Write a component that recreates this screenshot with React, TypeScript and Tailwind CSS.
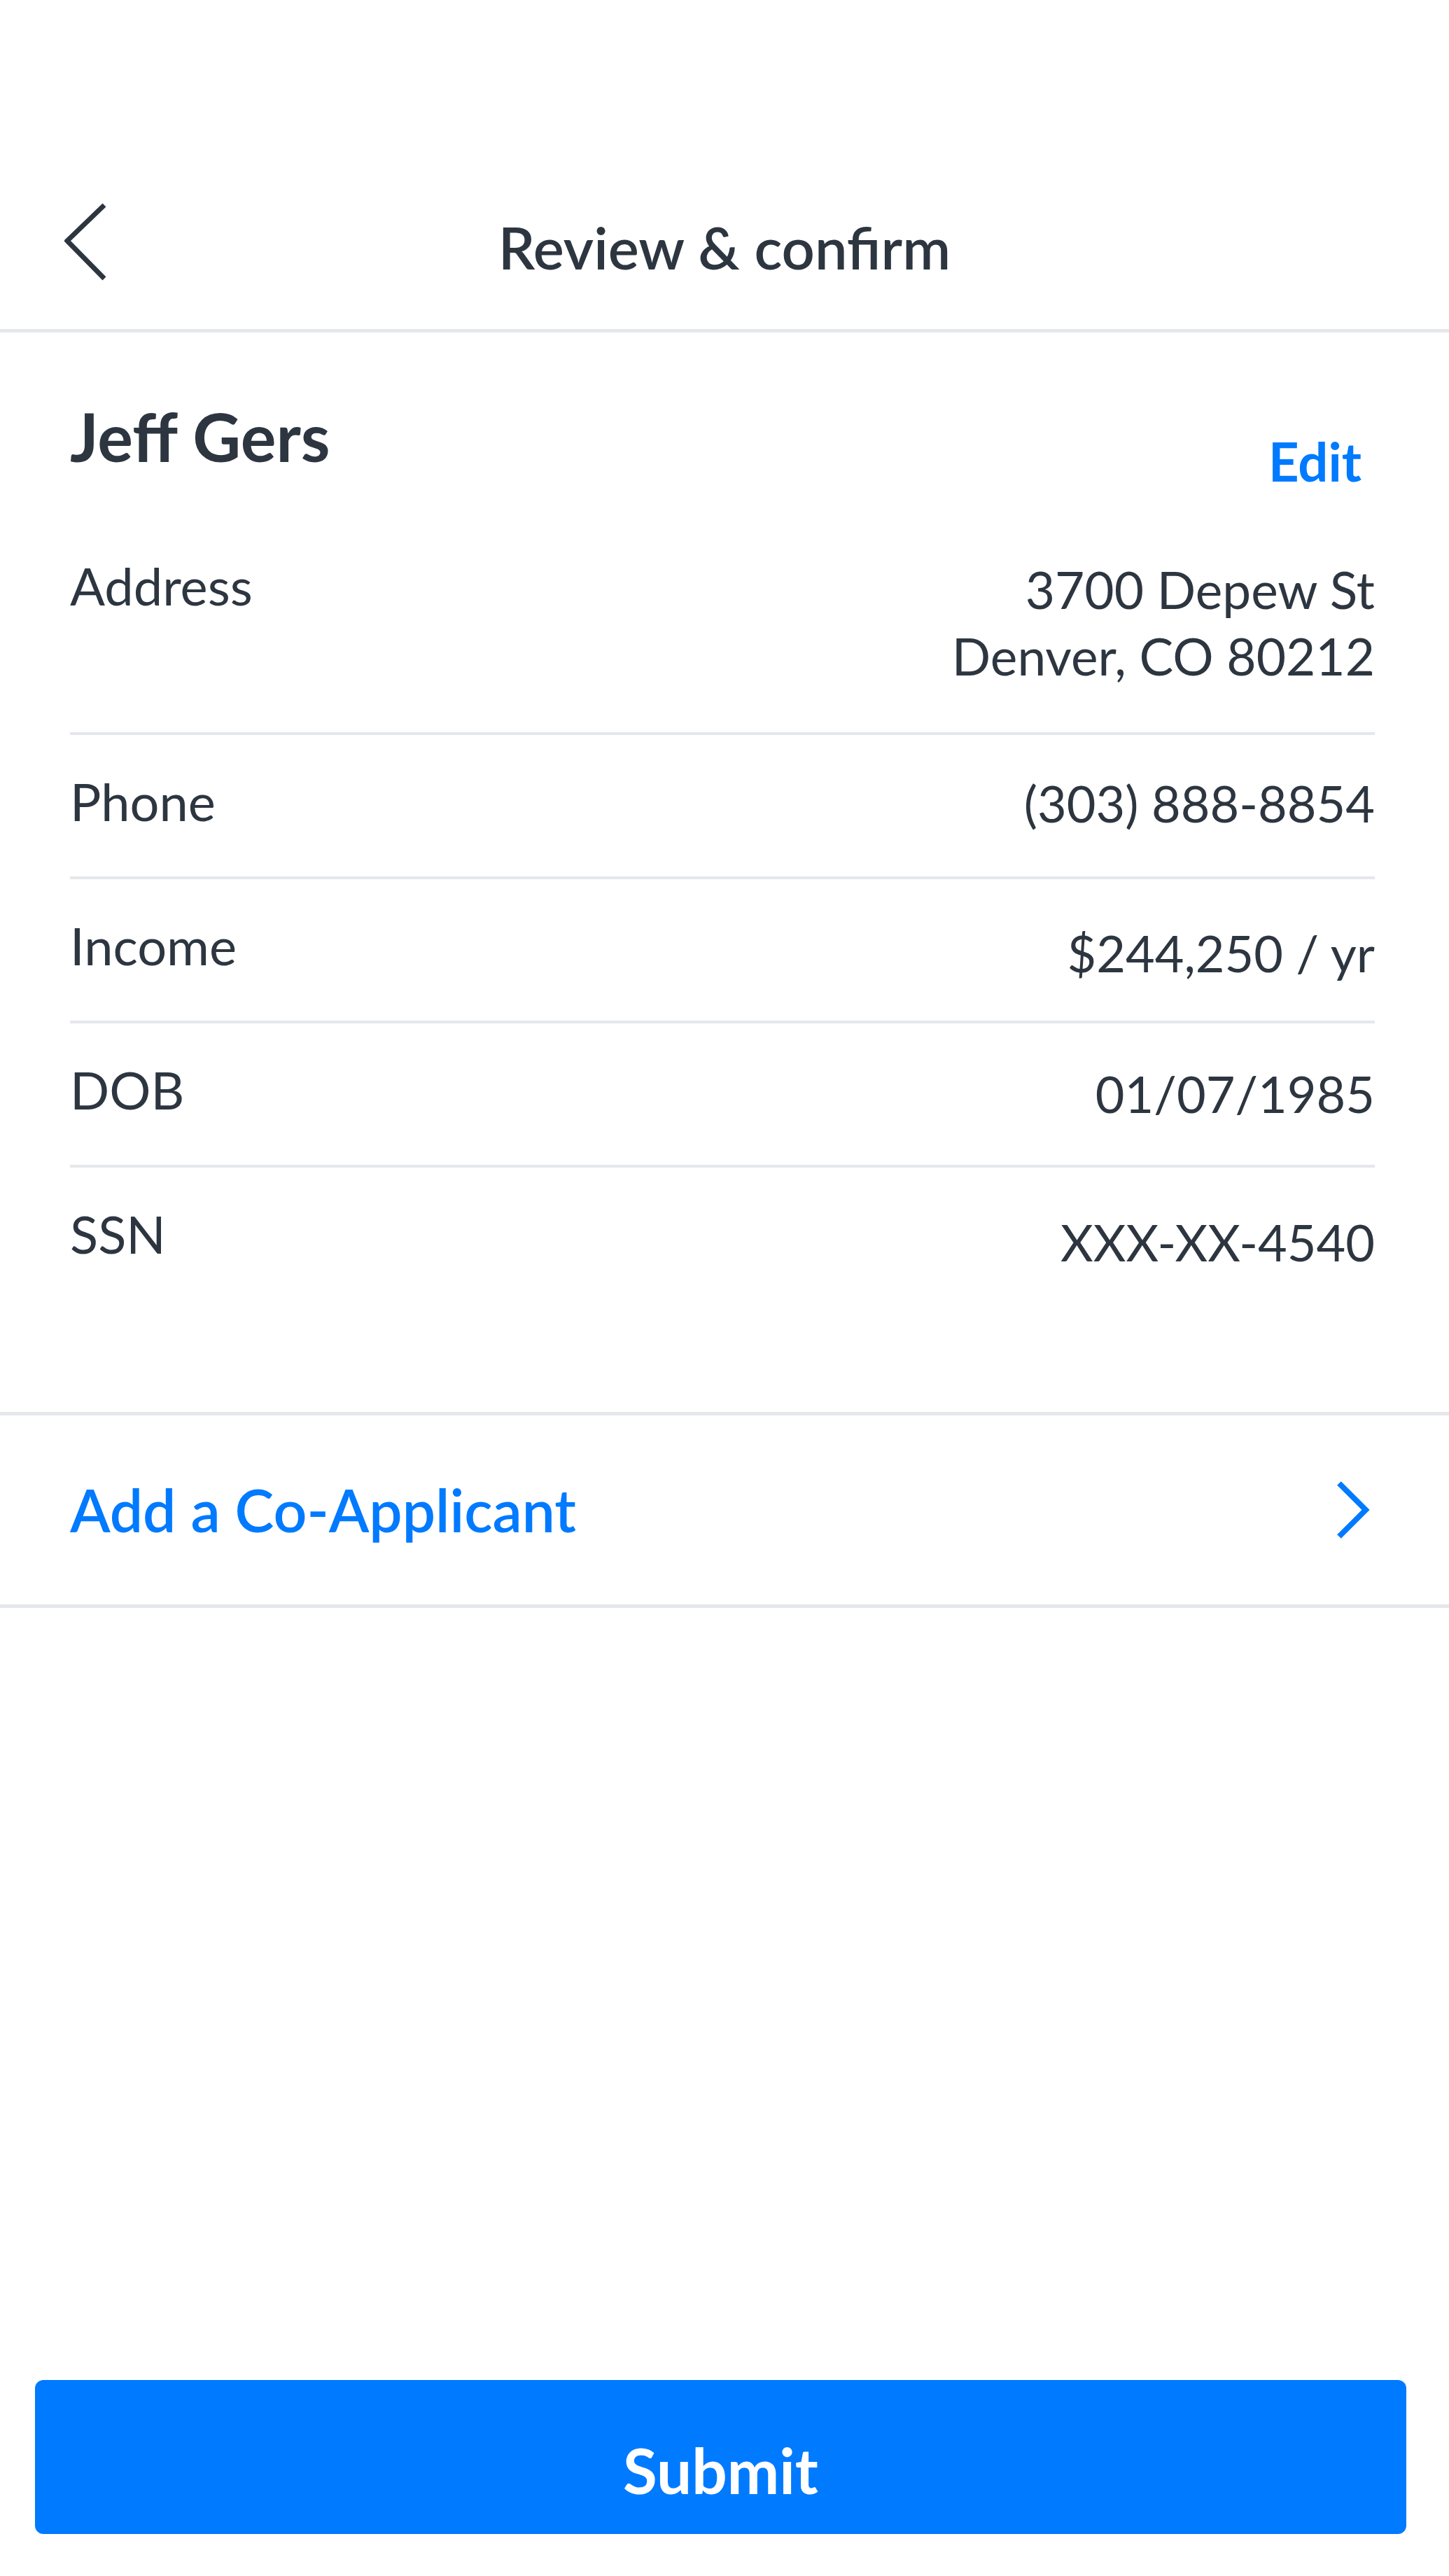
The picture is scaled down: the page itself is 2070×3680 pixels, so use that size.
import React from "react";

const rows = [
  { label: "Phone", value: "(303) 888-8854", valueClass: "mt-[2px]" },
  { label: "Income", value: "$244,250 / yr", valueClass: "mt-[10px]" },
  { label: "DOB", value: "01/07/1985", valueClass: "mt-[5px]" },
];

export default function App() {
  return (
    <div
      className="w-[2070px] h-[3680px] bg-white flex flex-col text-[#2d3640]"
      style={{ fontFamily: "Lato, 'Open Sans', sans-serif" }}
    >
      {/* status bar spacer */}
      <div className="h-[240px] shrink-0" />

      {/* header */}
      <div className="relative h-[235px] shrink-0 flex items-center justify-center border-b-[5px] border-[#e4e7eb]">
        <div className="absolute left-[92px] top-[50px]">
          <svg width="64" height="112" viewBox="0 0 64 112" fill="none">
            <polyline
              points="57,3 4,54 57,108"
              stroke="#2d3640"
              strokeWidth="7"
              strokeLinecap="butt"
              strokeLinejoin="miter"
            />
          </svg>
        </div>
        <div className="text-[83px] leading-[83px] font-semibold mt-[-4px]">Review &amp; confirm</div>
      </div>

      {/* applicant card */}
      <div className="pl-[100px] pr-[106px] shrink-0">
        <div className="flex justify-between items-start pt-[101px]">
          <div className="text-[95px] leading-[95px] font-bold">Jeff Gers</div>
          <div className="text-[76px] leading-[76px] font-bold text-[#007aff] mt-[45px] mr-[19px]">Edit</div>
        </div>

        <div className="flex justify-between items-start pt-[98px] pb-[61px] border-b-4 border-[#e4e7eb]">
          <div className="text-[74px] leading-[74px] mt-[5px]">Address</div>
          <div className="text-[73px] leading-[95px] text-right">
            <div>3700 Depew St</div>
            <div>Denver, CO 80212</div>
          </div>
        </div>

        {rows.map((r) => (
          <div
            key={r.label}
            className="flex justify-between items-start h-[206px] pt-[58px] border-b-4 border-[#e4e7eb]"
          >
            <div className="text-[74px] leading-[74px]">{r.label}</div>
            <div className={"text-[72px] leading-[74px] " + r.valueClass}>{r.value}</div>
          </div>
        ))}

        <div className="flex justify-between items-start h-[349px] pt-[58px]">
          <div className="text-[74px] leading-[74px]">SSN</div>
          <div className="text-[72px] leading-[74px] mt-[11px]">XXX-XX-4540</div>
        </div>
      </div>

      {/* co-applicant row */}
      <div className="shrink-0 border-t-[5px] border-b-[5px] border-[#e4e7eb] h-[280px] flex items-center justify-between pl-[100px] pr-[112px]">
        <div className="text-[84px] leading-[84px] font-semibold text-[#007aff]">Add a Co-Applicant</div>
        <svg width="50" height="82" viewBox="0 0 50 82" fill="none">
          <polyline points="5,3 43,41 5,79" stroke="#007aff" strokeWidth="8" strokeLinejoin="miter" />
        </svg>
      </div>

      <div className="flex-1" />

      {/* submit */}
      <div className="shrink-0 pl-[50px] pb-[60px]">
        <button className="w-[1959px] h-[220px] rounded-[12px] bg-[#007aff] text-white text-[89px] leading-[89px] font-bold flex items-center justify-center pt-[36px]">
          Submit
        </button>
      </div>
    </div>
  );
}
